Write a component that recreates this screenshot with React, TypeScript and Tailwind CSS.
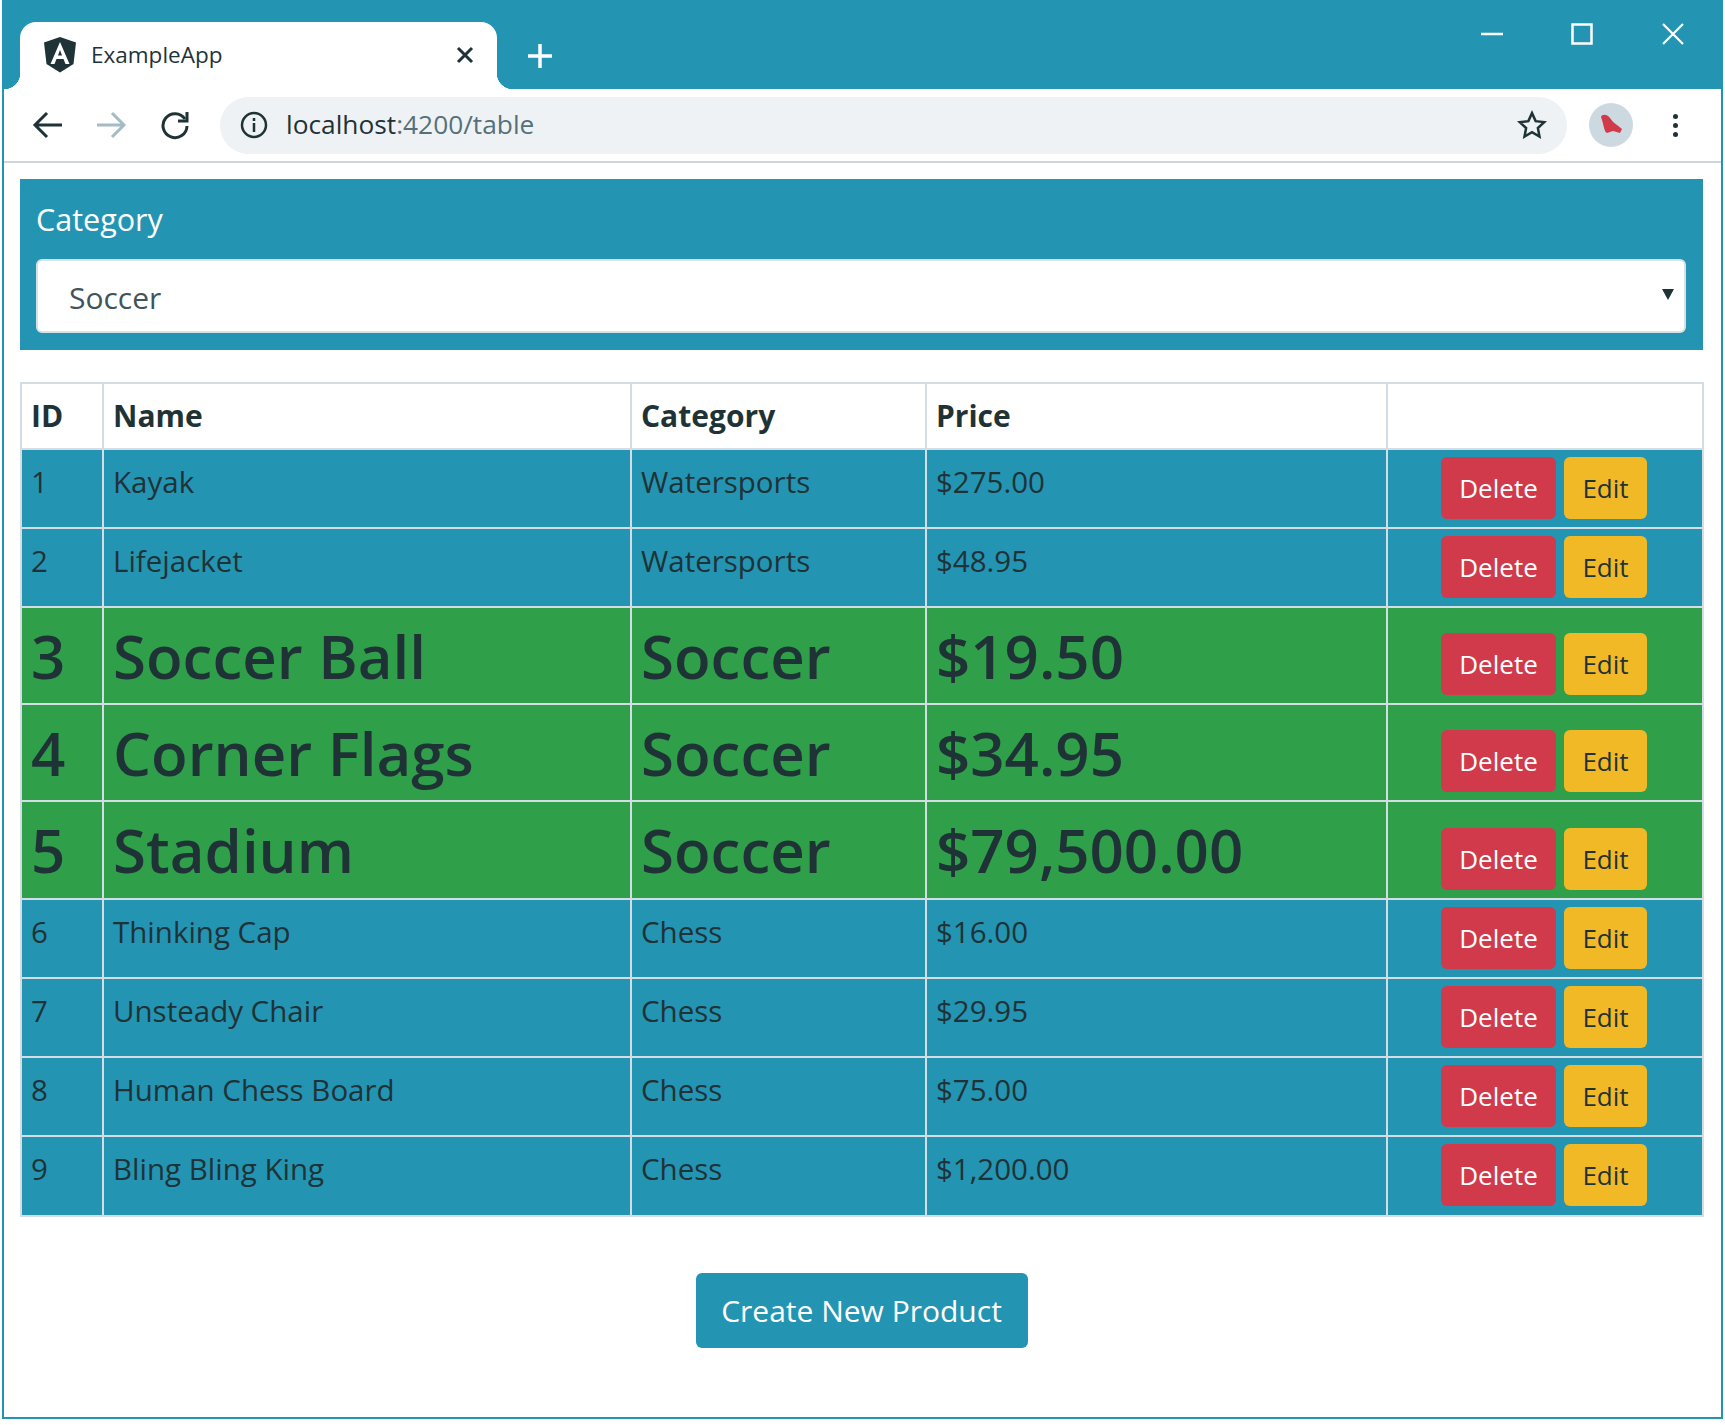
const rows = [
  { id: 1, name: "Kayak", cat: "Watersports", price: "$275.00", big: false, h: "h-[79px]" },
  { id: 2, name: "Lifejacket", cat: "Watersports", price: "$48.95", big: false, h: "h-[79px]" },
  { id: 3, name: "Soccer Ball", cat: "Soccer", price: "$19.50", big: true, h: "h-[97px]" },
  { id: 4, name: "Corner Flags", cat: "Soccer", price: "$34.95", big: true, h: "h-[97px]" },
  { id: 5, name: "Stadium", cat: "Soccer", price: "$79,500.00", big: true, h: "h-[98px]" },
  { id: 6, name: "Thinking Cap", cat: "Chess", price: "$16.00", big: false, h: "h-[79px]" },
  { id: 7, name: "Unsteady Chair", cat: "Chess", price: "$29.95", big: false, h: "h-[79px]" },
  { id: 8, name: "Human Chess Board", cat: "Chess", price: "$75.00", big: false, h: "h-[79px]" },
  { id: 9, name: "Bling Bling King", cat: "Chess", price: "$1,200.00", big: false, h: "h-[80px]" },
];

function AngularLogo() {
  return (
    <svg width="34" height="36" viewBox="0 0 34 36">
      <path d="M17 0 L33 5.5 L30.5 27 L17 35.5 L3.5 27 L1 5.5 Z" fill="#1f3337" />
      <path d="M17 5 L7.5 27 H11.5 L13.5 22 H20.5 L22.5 27 H26.5 Z M15 18.5 L17 13 L19 18.5 Z" fill="#fff" fillRule="evenodd" />
    </svg>
  );
}

function Tools() {
  return (
    <div className="flex h-[74px] shrink-0 items-center border-b-2 border-[#cbd6de] bg-white">
      <svg className="ml-[28px] shrink-0" width="32" height="30" viewBox="0 0 32 30" fill="none" stroke="#1f3337" strokeWidth="3">
        <path d="M30 15 H4 M15 3 L3 15 L15 27" />
      </svg>
      <svg className="ml-[31px] shrink-0" width="32" height="30" viewBox="0 0 32 30" fill="none" stroke="#a3bcc5" strokeWidth="3">
        <path d="M2 15 H28 M17 3 L29 15 L17 27" />
      </svg>
      <svg className="ml-[33px] shrink-0" width="30" height="30" viewBox="0 0 30 30" fill="none" stroke="#1f3337" strokeWidth="3">
        <path d="M25 9 A12 12 0 1 0 27 16" />
        <path d="M27 2 V11 H18" />
      </svg>
      <div className="ml-[30px] flex h-[57px] w-[1347px] shrink-0 items-center rounded-full bg-[#eef2f5] pr-[20px] pl-[20px]">
        <svg width="28" height="28" viewBox="0 0 28 28" fill="none" stroke="#1f3337" strokeWidth="2.5">
          <circle cx="14" cy="14" r="12" />
          <path d="M14 12 V21 M14 7 V10" />
        </svg>
        <span className="ml-[18px] text-[26.3px] text-[#1f3337]">
          localhost<span className="text-[#557079]">:4200/table</span>
        </span>
        <svg className="ml-auto" width="30" height="30" viewBox="0 0 24 24" fill="none" stroke="#1f3337" strokeWidth="2">
          <path d="M12 2.5 L14.9 8.9 L21.8 9.7 L16.7 14.4 L18 21.3 L12 17.8 L6 21.3 L7.3 14.4 L2.2 9.7 L9.1 8.9 Z" />
        </svg>
      </div>
      <div className="ml-[22px] flex h-[44px] w-[44px] shrink-0 items-center justify-center rounded-full bg-[#cdd9e0]">
        <svg width="24" height="22" viewBox="0 0 24 22">
          <path d="M2 3 C3 0 8 0 11 4 C13 7 15 9 18 11 L23 15 L21 19 L14 17 L8 19 C5 18 5 11 2 3 Z" fill="#d03a4b" />
        </svg>
      </div>
      <div className="ml-[40px] flex shrink-0 flex-col gap-[4px]">
        <div className="h-[5px] w-[5px] rounded-full bg-[#1f3337]" />
        <div className="h-[5px] w-[5px] rounded-full bg-[#1f3337]" />
        <div className="h-[5px] w-[5px] rounded-full bg-[#1f3337]" />
      </div>
    </div>
  );
}

function TitleBar() {
  return (
    <div className="flex h-[89px] shrink-0 items-end bg-[#2494b3]">
      <div className="relative ml-[16px] flex h-[67px] w-[477px] shrink-0 items-center rounded-t-[16px] bg-white pb-[2px] pl-[23px] pr-[23px]">
        <div className="absolute bottom-0 -left-[16px] h-[16px] w-[16px] bg-[radial-gradient(circle_at_0_0,#2494b3_16px,#ffffff_16.5px)]" />
        <div className="absolute -right-[16px] bottom-0 h-[16px] w-[16px] bg-[radial-gradient(circle_at_100%_0,#2494b3_16px,#ffffff_16.5px)]" />
        <AngularLogo />
        <span className="ml-[14px] text-[22.5px] text-[#1f3337]">ExampleApp</span>
        <svg className="ml-auto" width="18" height="18" viewBox="0 0 18 18" stroke="#1f3337" strokeWidth="3">
          <path d="M2 2 L16 16 M16 2 L2 16" />
        </svg>
      </div>
      <svg className="mb-[20px] ml-[30px] shrink-0" width="26" height="26" viewBox="0 0 26 26" stroke="#fff" strokeWidth="3.5">
        <path d="M13 1 V25 M1 13 H25" />
      </svg>
      <div className="mb-[43px] ml-auto flex items-center">
        <svg width="24" height="24" viewBox="0 0 24 24" stroke="#fff" strokeWidth="2.5">
          <path d="M1 12 H23" />
        </svg>
        <svg className="ml-[67px]" width="22" height="22" viewBox="0 0 22 22" fill="none" stroke="#fff" strokeWidth="2.5">
          <rect x="1.5" y="1.5" width="19" height="19" />
        </svg>
        <svg className="mr-[36px] ml-[68px]" width="24" height="24" viewBox="0 0 24 24" stroke="#fff" strokeWidth="2.2">
          <path d="M2 2 L22 22 M22 2 L2 22" />
        </svg>
      </div>
    </div>
  );
}

function Row({ r }: { r: (typeof rows)[number] }) {
  const rowClass = r.big
    ? "bg-[#2f9f4a] text-[60px] font-semibold leading-[86px]"
    : "bg-[#2494b3] text-[29.5px] leading-[40px]";
  const cell = r.big
    ? "border-2 border-[#d3dde3] px-[9px] align-middle"
    : "border-2 border-[#d3dde3] px-[9px] pt-[12px] align-top";
  return (
    <tr className={`${rowClass} ${r.h}`}>
      <td className={cell}>{r.id}</td>
      <td className={cell}>{r.name}</td>
      <td className={cell}>{r.cat}</td>
      <td className={cell}>{r.price}</td>
      <td className={r.big ? "border-2 border-[#d3dde3] pt-[17px] align-middle" : "border-2 border-[#d3dde3] pb-[2px] align-middle"}>
        <div className="flex justify-center gap-[8px] pr-[2px]">
          <button className="flex h-[62px] w-[115px] items-center justify-center rounded-[6px] bg-[#d03a4b] text-[26px] leading-none font-normal text-white">
            Delete
          </button>
          <button className="flex h-[62px] w-[83px] items-center justify-center rounded-[6px] bg-[#f2b927] text-[26px] leading-none font-normal text-[#1f3337]">
            Edit
          </button>
        </div>
      </td>
    </tr>
  );
}

export default function App() {
  return (
    <div className="flex h-[1425px] w-[1725px] flex-col bg-white font-['Open_Sans','Noto_Sans',sans-serif] text-[#1f3337]">
      <div className="mx-[2px] mb-[6px] flex h-[1419px] flex-col border-x-2 border-b-2 border-[#2494b3]">
        <TitleBar />
        <Tools />
        <div className="flex flex-1 flex-col pt-[16px] pr-[18px] pl-[16px]">
          <div className="flex h-[171px] shrink-0 flex-col bg-[#2494b3] pt-[20px] pr-[17px] pb-[17px] pl-[16px]">
            <label className="text-[30.5px] leading-[40px] text-white">Category</label>
            <div className="mt-[20px] flex h-[74px] items-center justify-between rounded-[6px] border-2 border-[#d8e1e6] bg-white pt-[2px] pr-[10px] pl-[31px] text-[30px] text-[#3f555b]">
              <span>Soccer</span>
              <svg className="-mt-[6px]" width="12" height="11" viewBox="0 0 12 11">
                <path d="M0 0 H12 L6 11 Z" fill="#1f3337" />
              </svg>
            </div>
          </div>
          <table className="mt-[32px] w-[1682px] table-fixed border-collapse self-start">
            <colgroup>
              <col className="w-[82px]" />
              <col className="w-[528px]" />
              <col className="w-[295px]" />
              <col className="w-[461px]" />
              <col className="w-[316px]" />
            </colgroup>
            <thead>
              <tr className="h-[66px] text-left text-[30px] font-bold">
                <th className="border-2 border-[#d3dde3] px-[9px] pb-[2px]">ID</th>
                <th className="border-2 border-[#d3dde3] px-[9px] pb-[2px]">Name</th>
                <th className="border-2 border-[#d3dde3] px-[9px] pb-[2px]">Category</th>
                <th className="border-2 border-[#d3dde3] px-[9px] pb-[2px]">Price</th>
                <th className="border-2 border-[#d3dde3]" />
              </tr>
            </thead>
            <tbody>
              {rows.map((r) => (
                <Row key={r.id} r={r} />
              ))}
            </tbody>
          </table>
          <button className="mt-[56px] h-[75px] w-[332px] self-center rounded-[6px] bg-[#2494b3] text-[30px] text-white">
            Create New Product
          </button>
        </div>
      </div>
    </div>
  );
}
